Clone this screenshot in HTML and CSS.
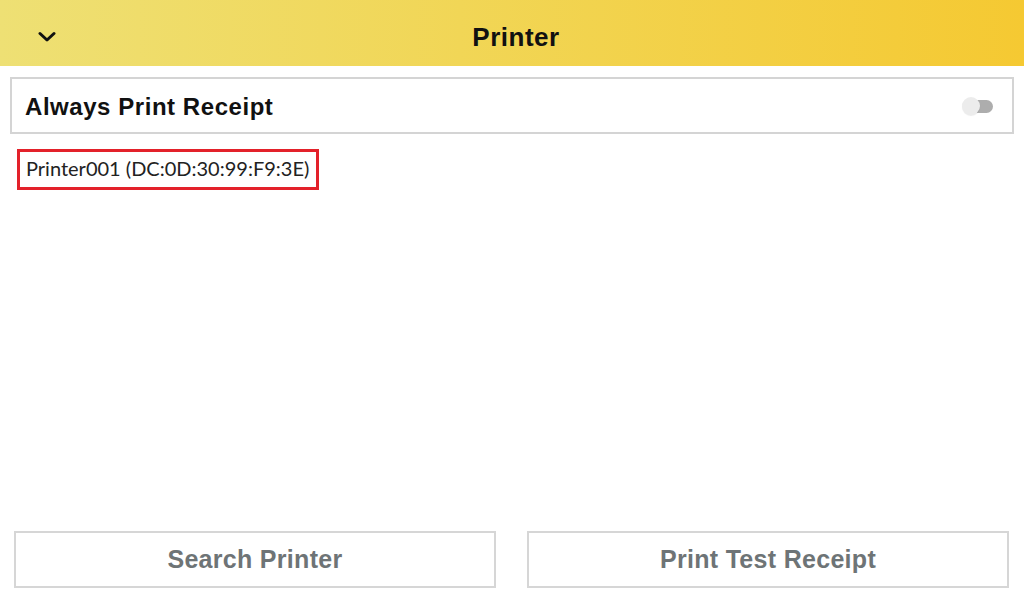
FILE: index.html
```html
<!DOCTYPE html>
<html>
<head>
<meta charset="utf-8">
<link rel="stylesheet" href="styles.css">
</head>
<body>
<div class="app">
  <header class="topbar">
    <button class="back" aria-label="Close">
      <svg width="18" height="12" viewBox="0 0 18 12"><path d="M2 2.5 L9 9 L16 2.5" fill="none" stroke="#111" stroke-width="3" stroke-linecap="round" stroke-linejoin="round"/></svg>
    </button>
    <h1 class="title">Printer</h1>
  </header>
  <main class="content">
    <div class="setting">
      <span class="setting-label">Always Print Receipt</span>
      <span class="toggle"><span class="track"></span><span class="knob"></span></span>
    </div>
    <ul class="devices">
      <li class="device selected">Printer001 (DC:0D:30:99:F9:3E)</li>
    </ul>
    <div class="actions">
      <button class="action">Search Printer</button>
      <button class="action">Print Test Receipt</button>
    </div>
  </main>
</div>
</body>
</html>
```
FILE: styles.css
```css
* { box-sizing: border-box; }
html, body { margin: 0; padding: 0; background: #fff; }
body { font-family: "Liberation Sans", Arial, sans-serif; color: #111; }
.app { width: 1024px; height: 606px; display: flex; flex-direction: column; }
.topbar {
  height: 66px;
  flex: none;
  background: linear-gradient(90deg, #eee074 0%, #f1d656 45%, #f5c932 100%);
  display: flex;
  align-items: center;
  justify-content: center;
  position: relative;
}
.back {
  position: absolute;
  left: 36px;
  top: 28px;
  width: 22px;
  height: 18px;
  padding: 0;
  border: 0;
  background: none;
  display: flex;
  align-items: center;
  justify-content: center;
}
.title {
  margin: 0;
  font-size: 26px;
  font-weight: bold;
  color: #111;
  letter-spacing: 0.5px;
  padding-left: 8px;
  padding-top: 9px;
}
.content { flex: 1; display: flex; flex-direction: column; padding: 11px 10px 0 10px; }
.setting {
  height: 57px;
  border: 2px solid #d4d4d4;
  display: flex;
  align-items: center;
  justify-content: space-between;
  padding: 0 19px 0 13px;
}
.setting-label { font-size: 24px; font-weight: bold; color: #111; letter-spacing: 0.55px; padding-top: 2px; }
.toggle { position: relative; width: 31px; height: 18px; display: block; }
.toggle .track {
  position: absolute; left: 6px; top: 3px; width: 25px; height: 13px;
  border-radius: 7px; background: #adadad;
}
.toggle .knob {
  position: absolute; left: 0; top: 0; width: 18px; height: 18px;
  border-radius: 50%; background: #ececec;
  box-shadow: 0 1px 1px rgba(0,0,0,0.08);
}
.devices { list-style: none; margin: 15px 0 0 0; padding: 0; flex: 1; }
.device {
  display: inline-block;
  font-family: "Lato", "Open Sans", sans-serif;
  font-size: 20px;
  color: #222;
  padding: 3px 5px 7px 6px;
  margin-left: 7px;
  width: 302px;
  height: 41px;
  line-height: 26px;
  white-space: nowrap;
}
.device.selected { border: 3px solid #e3212a; }
.actions { display: flex; gap: 31px; padding: 0 5px 18px 4px; }
.action {
  flex: 1;
  height: 57px;
  background: #fff;
  border: 2px solid #d6d6d6;
  font-family: "Liberation Sans", Arial, sans-serif;
  font-size: 25px;
  font-weight: bold;
  letter-spacing: 0.3px;
  color: #6e7476;
  padding: 0;
}
```
